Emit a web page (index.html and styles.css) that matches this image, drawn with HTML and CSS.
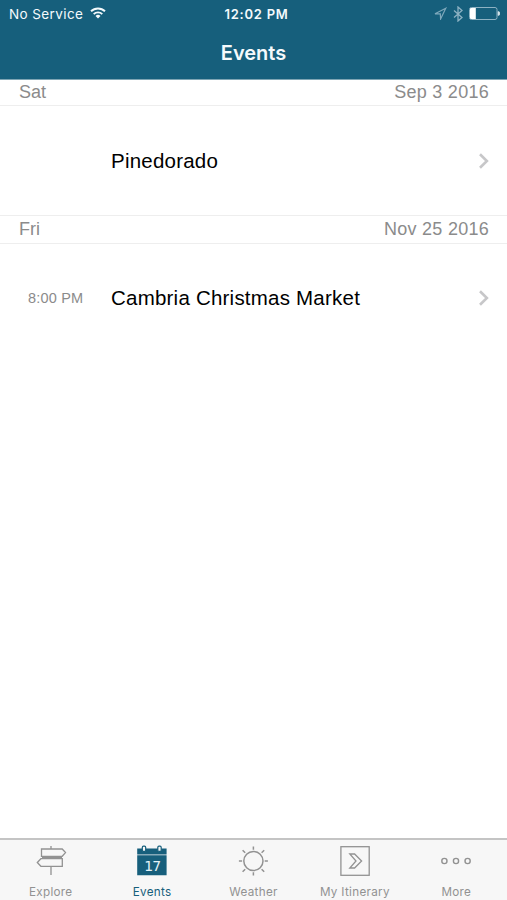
FILE: index.html
```html
<!DOCTYPE html>
<html lang="en">
<head>
<meta charset="utf-8">
<title>Events</title>
<link rel="stylesheet" href="styles.css">
</head>
<body>
<div class="app">
  <header class="top">
    <div class="status">
      <div class="carrier">
        <span>No Service</span>
        <svg class="wifi" width="16" height="12" viewBox="0 0 16 12" fill="none" stroke="#f4fafc" stroke-width="1.9">
          <path d="M1 4.3a10 10 0 0 1 14 0M3.7 7.1a6.2 6.2 0 0 1 8.6 0"/>
          <path d="M5.5 8.9a3.6 3.6 0 0 1 5 0L8 11.5z" fill="#f4fafc" stroke="none"/>
        </svg>
      </div>
      <div class="clock">12:02 PM</div>
      <div class="indicators">
        <svg width="13" height="13" viewBox="0 0 13 13" fill="none" stroke="#7fa9bc" stroke-width="1.2"><path d="M11.8 1.2 1 6.8l5.3.1.3 5.1z"/></svg>
        <svg width="10" height="16" viewBox="0 0 10 16" fill="none" stroke="#8db2c3" stroke-width="1.3"><path d="M1 4.4l8 7L5 15V1l4 3.6-8 7"/></svg>
        <svg width="31" height="13" viewBox="0 0 31 13"><rect x=".5" y=".5" width="27.5" height="12" rx="2" fill="none" stroke="#8db2c3"/><path d="M2 1h4.8v11H2A1 1 0 0 1 1 11V2a1 1 0 0 1 1-1z" fill="#fff"/><path d="M29 4.5a2 2 0 0 1 0 4z" fill="#d5e4ea" stroke="#d5e4ea" stroke-width=".6"/></svg>
      </div>
    </div>
    <h1 class="title">Events</h1>
  </header>
  <main class="list">
    <div class="day first"><span>Sat</span><span class="date">Sep 3 2016</span></div>
    <div class="event">
      <span class="time"></span><span class="name">Pinedorado</span>
      <svg class="chevron" width="12" height="18" viewBox="0 0 12 18"><path d="M2 2.2 8.9 9 2 15.8" fill="none" stroke="#c7c7c9" stroke-width="2.6"/></svg>
    </div>
    <div class="day"><span>Fri</span><span class="date">Nov 25 2016</span></div>
    <div class="event last">
      <span class="time">8:00 PM</span><span class="name">Cambria Christmas Market</span>
      <svg class="chevron" width="12" height="18" viewBox="0 0 12 18"><path d="M2 2.2 8.9 9 2 15.8" fill="none" stroke="#c7c7c9" stroke-width="2.6"/></svg>
    </div>
  </main>
  <nav class="tabs">
    <div class="tab">
      <svg width="32" height="32" viewBox="0 0 32 32" fill="none" stroke="#929292" stroke-width="1.3"><path d="M16 1v3M16 11.3v2.4M16 21.3V30"/><path d="M6.5 4h20.7l3.3 3.6-3.3 3.7H6.5zM27.3 13.7H5.9L2.3 17.5l3.6 3.8h21.4zM7 12.4h20"/></svg>
      <span>Explore</span>
    </div>
    <div class="tab active">
      <svg width="32" height="32" viewBox="0 0 32 32"><path d="M1.2 3.5h29.4v5.9H1.2zM1.2 10.3h29.4v20H1.2z" fill="#175f7c"/><rect x="6.3" y="1.2" width="3.4" height="5.2" rx="1.2" fill="#f7f7f7" stroke="#175f7c" stroke-width="1.2"/><rect x="21.8" y="1.2" width="3.4" height="5.2" rx="1.2" fill="#f7f7f7" stroke="#175f7c" stroke-width="1.2"/><text class="date-number" x="16.2" y="25.6" text-anchor="middle">17</text></svg>
      <span>Events</span>
    </div>
    <div class="tab">
      <svg width="32" height="32" viewBox="0 0 32 32" fill="none" stroke="#929292" stroke-width="1.5"><circle cx="16.4" cy="16" r="9.6"/><path d="M16.4 1.5v3.2M16.4 27.3v3.2M1.9 16h3.2M27.7 16h3.2M5.6 5.2l2.6 2.6M24.6 24.2l2.6 2.6M27.2 5.2l-2.6 2.6M8.2 24.2l-2.6 2.6"/></svg>
      <span>Weather</span>
    </div>
    <div class="tab">
      <svg width="32" height="32" viewBox="0 0 32 32" fill="none" stroke="#929292" stroke-width="1.3"><rect x="1.9" y="1.7" width="28.3" height="28.6"/><path d="M10.8 9h4.8l7 7-7 7h-4.8l6.2-7z"/></svg>
      <span>My Itinerary</span>
    </div>
    <div class="tab">
      <svg width="32" height="32" viewBox="0 0 32 32" fill="none" stroke="#929292" stroke-width="1.4"><circle cx="4.4" cy="16" r="2.6"/><circle cx="16" cy="16" r="2.6"/><circle cx="27.6" cy="16" r="2.6"/></svg>
      <span>More</span>
    </div>
  </nav>
</div>
</body>
</html>
```
FILE: styles.css
```css
* { box-sizing: border-box; }
body { margin: 0; background: #fff; font-family: "Liberation Sans", Arial, sans-serif; }
svg { display: block; flex: none; }
.app { display: flex; flex-direction: column; width: 507px; height: 900px; overflow: hidden; }
.top { height: 80px; background: #165f7c; border-bottom: 1px solid #7ea5b4; color: #f4fafc; font-family: Inter, sans-serif; }
.status { display: grid; grid-template-columns: 1fr auto 1fr; height: 28px; padding: 0 7px 0 9px; align-items: center; font-size: 13.5px; line-height: 28px; }
.carrier { display: flex; align-items: center; gap: 7px; letter-spacing: .4px; }
.wifi { margin-top: -3px; }
.clock { padding-left: 4px; font-weight: 600; letter-spacing: .9px; font-size: 13px; }
.indicators { display: flex; justify-content: flex-end; align-items: center; gap: 6px; margin-top: -1px; }
.clock { letter-spacing: .75px; }
.title { margin: 10px 0 0; text-align: center; font-size: 20px; line-height: 30px; font-weight: 600; }
.list { flex: 1; }
.day { display: flex; justify-content: space-between; align-items: center; height: 29px; padding: 0 18px 1px 19px; border: solid #eee; border-width: 1px 0; color: #8b8b8b; font-size: 18px; }
.date { letter-spacing: .27px; }
.first { height: 26px; border-top: 0; padding-bottom: 0; }
.event { display: flex; align-items: center; height: 109px; padding: 0 17px 0 0; }
.last { height: 108px; }
.time { width: 111px; padding-left: 28px; font-size: 14.5px; letter-spacing: .2px; color: #8b8b8b; }
.name { flex: 1; padding-top: 1px; font-size: 20.5px; letter-spacing: .22px; color: #000; }
.last .name { padding: 0 0 1px; }
.tabs { display: grid; grid-template-columns: repeat(5, 1fr); height: 62px; border-top: 2px solid #c4c4c4; background: #f7f7f7; }
.tab { display: flex; flex-direction: column; align-items: center; padding: 5px 0 0; color: #929292; font: 11.7px/16px Inter, sans-serif; letter-spacing: .3px; }
.tab span { margin-top: 7px; }
.active { color: #175f7c; }
.date-number { fill: #e3f2f7; font: 14px "DejaVu Sans", sans-serif; letter-spacing: -1px; }
```
